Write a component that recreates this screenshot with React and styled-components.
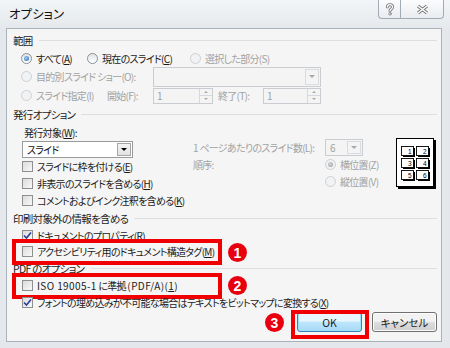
import React from 'react';
import styled, { createGlobalStyle, css } from 'styled-components';

const GlobalStyle = createGlobalStyle`
  html, body { margin: 0; padding: 0; }
  body {
    width: 450px;
    height: 348px;
    overflow: hidden;
    background: #e6e9ed;
    font-family: "Noto Sans CJK JP", "Liberation Sans", sans-serif;
    font-size: 10px;
    letter-spacing: -0.7px;
    font-feature-settings: "palt";
    color: #1b1b1b;
  }
  * { box-sizing: border-box; }
`;

const Window = styled.div`
  width: 450px;
  height: 348px;
  display: flex;
  flex-direction: column;
  background: linear-gradient(#f3f5f7, #e4e8ec 30px);
`;

const TitleBar = styled.div`
  height: 28px;
  display: flex;
  align-items: flex-start;
  justify-content: space-between;
`;

const Title = styled.div`
  padding: 5px 0 0 9px;
  font-size: 12.5px;
  letter-spacing: 0;
  line-height: 18px;
  color: #111;
`;

const Controls = styled.div`
  display: flex;
  margin-right: 6px;
`;

const CtrlButton = styled.div`
  width: ${(p) => p.w}px;
  height: 19px;
  display: flex;
  align-items: center;
  justify-content: center;
  border: 1px solid #a3acb6;
  border-top: none;
  background: linear-gradient(#fbfcfd, #e9ecf0);
  ${(p) => p.first && css`border-radius: 0 0 0 4px; border-right: none;`}
  ${(p) => p.last && css`border-radius: 0 0 4px 0;`}
`;

const Panel = styled.div`
  flex: 1;
  margin: 0 8px 6px 6px;
  border: 1px solid #a9b1b9;
  background: #f5f5f5;
  padding: 2px 4px 0 0;
  display: flex;
  flex-direction: column;
`;

const GroupHeader = styled.div`
  height: ${(p) => p.h || 18}px;
  display: flex;
  align-items: center;
  padding-left: 6px;
  font-size: 10.5px;
  &::after {
    content: '';
    flex: 1;
    height: 1px;
    margin-left: 6px;
    background: #dcdfe2;
  }
`;

const Row = styled.div`
  position: relative;
  height: ${(p) => p.h || 17}px;
  display: flex;
  align-items: center;
  padding-left: ${(p) => p.indent ?? 14}px;
`;

const Label = styled.span`
  color: ${(p) => (p.disabled ? '#a2a2a2' : '#1b1b1b')};
  white-space: nowrap;
  ${(p) => p.w && css`width: ${p.w}px; flex-shrink: 0;`}
`;

const Latin = styled.span`
  letter-spacing: 0.4px;
`;

const Item = styled.div`
  display: flex;
  align-items: center;
  width: ${(p) => p.w}px;
  flex-shrink: 0;
`;

const RadioCircle = styled.span`
  width: 11px;
  height: 11px;
  border-radius: 50%;
  flex-shrink: 0;
  margin-right: 4px;
  display: flex;
  align-items: center;
  justify-content: center;
  border: 1px solid ${(p) => (p.disabled ? '#cdd1d5' : '#8b9197')};
  background: ${(p) => (p.disabled ? '#f1f2f3' : 'linear-gradient(#e0e3e6, #ffffff)')};
  &::after {
    content: '';
    display: ${(p) => (p.checked ? 'block' : 'none')};
    width: 5px;
    height: 5px;
    border-radius: 50%;
    background: ${(p) =>
      p.disabled
        ? 'radial-gradient(circle at 40% 40%, #d8d8d8, #9a9a9a)'
        : 'radial-gradient(circle at 40% 40%, #9fd3ff, #1d5ea8)'};
  }
`;

const Box = styled.span`
  width: 11px;
  height: 11px;
  flex-shrink: 0;
  margin-right: 4px;
  border: 1px solid #8e8f8f;
  background: linear-gradient(135deg, #dcdcdc, #f8f8f8);
  display: flex;
  align-items: center;
  justify-content: center;
`;

const Radio = ({ checked, disabled, children, w }) => (
  <Item w={w}>
    <RadioCircle checked={checked} disabled={disabled} />
    <Label disabled={disabled}>{children}</Label>
  </Item>
);

const Check = ({ checked, children }) => (
  <>
    <Box>
      {checked && (
        <svg width="9" height="9" viewBox="0 0 9 9">
          <path d="M1 4.5 L3.5 7 L8 1.5" stroke="#2a3f9a" strokeWidth="1.6" fill="none" />
        </svg>
      )}
    </Box>
    <Label>{children}</Label>
  </>
);

const Combo = styled.div`
  width: ${(p) => p.w}px;
  height: ${(p) => p.h || 17}px;
  flex-shrink: 0;
  display: flex;
  align-items: stretch;
  border: 1px solid ${(p) => (p.disabled ? '#c9cdd1' : '#9a9a9a')};
  background: ${(p) => (p.disabled ? '#f4f4f4' : '#fff')};
  padding: 1px;
`;

const ComboText = styled.span`
  flex: 1;
  padding-left: 3px;
  line-height: 13px;
  color: ${(p) => (p.disabled ? '#a2a2a2' : '#111')};
`;

const DropBtn = styled.span`
  width: 14px;
  display: flex;
  align-items: center;
  justify-content: center;
  border: 1px solid ${(p) => (p.disabled ? '#d9dcdf' : '#a6a6a6')};
  background: ${(p) => (p.disabled ? '#f4f4f4' : 'linear-gradient(#f4f4f4, #e2e2e2)')};
  &::after {
    content: '';
    border-left: 3px solid transparent;
    border-right: 3px solid transparent;
    border-top: 3px solid ${(p) => (p.disabled ? '#a8a8a8' : '#000')};
  }
`;

const Spin = styled.div`
  width: ${(p) => p.w}px;
  height: 16px;
  flex-shrink: 0;
  display: flex;
  border: 1px solid #c9cdd1;
  background: #f4f4f4;
`;

const SpinBtns = styled.span`
  width: 13px;
  display: flex;
  flex-direction: column;
  border-left: 1px solid #d6d9dc;
  span {
    flex: 1;
    display: flex;
    align-items: center;
    justify-content: center;
  }
  span:first-child { border-bottom: 1px solid #d6d9dc; }
  span:first-child::after {
    content: '';
    border-left: 2px solid transparent;
    border-right: 2px solid transparent;
    border-bottom: 2px solid #a8a8a8;
  }
  span:last-child::after {
    content: '';
    border-left: 2px solid transparent;
    border-right: 2px solid transparent;
    border-top: 2px solid #a8a8a8;
  }
`;

const Columns = styled.div`
  display: flex;
`;

const LeftCol = styled.div`
  width: 188px;
  display: flex;
  flex-direction: column;
`;

const RightCol = styled.div`
  flex: 1;
  display: flex;
  padding-top: 16px;
`;

const OrderGrid = styled.div`
  display: grid;
  grid-template-columns: 132px 70px;
  grid-auto-rows: 17px;
  align-items: center;
  align-content: start;
`;

const Cell = styled.div`
  display: flex;
  align-items: center;
`;

const LayoutIcon = styled.svg`
  margin-left: 1px;
  margin-top: -1px;
`;

const Footer = styled.div`
  display: flex;
  justify-content: flex-end;
  align-items: center;
  gap: 10px;
  margin-top: 1px;
`;

const Button = styled.div`
  position: relative;
  width: 65px;
  height: 20px;
  display: flex;
  align-items: center;
  justify-content: center;
  border-radius: 3px;
  font-size: 10.5px;
  letter-spacing: 0;
  border: 1px solid ${(p) => (p.primary ? '#3c7fb1' : '#707070')};
  background: ${(p) =>
    p.primary
      ? 'linear-gradient(#eaf6fd 45%, #bee6fd 50%, #a7d9f5)'
      : 'linear-gradient(#f2f2f2 45%, #ebebeb 50%, #dddddd 51%, #cfcfcf)'};
  box-shadow: inset 0 0 0 1px ${(p) => (p.primary ? '#9ae4f8' : '#fcfcfc')};
`;

const Highlight = styled.span`
  position: absolute;
  border: 4px solid #f00000;
  pointer-events: none;
  ${(p) => css`
    left: ${p.l}px;
    top: ${p.t}px;
    width: ${p.w}px;
    height: ${p.h}px;
  `}
`;

const Marker = styled.span`
  position: absolute;
  width: 19px;
  height: 19px;
  border-radius: 50%;
  background: #e8000e;
  color: #fff;
  font-family: "Liberation Sans", "DejaVu Sans", sans-serif;
  font-weight: 700;
  font-size: 14px;
  letter-spacing: 0;
  display: flex;
  align-items: center;
  justify-content: center;
  left: ${(p) => p.l}px;
  top: ${(p) => p.t}px;
`;

const HelpGlyph = () => (
  <svg width="10" height="13" viewBox="-5 -7 10 14">
    <g fill="none" strokeLinecap="round">
      <path d="M-2.8 -2.6 C-2.8 -6 2.8 -6 2.8 -2.6 C2.8 -0.4 0 -0.6 0 1.6" stroke="#777" strokeWidth="3.2" />
      <path d="M-2.8 -2.6 C-2.8 -6 2.8 -6 2.8 -2.6 C2.8 -0.4 0 -0.6 0 1.6" stroke="#fff" strokeWidth="1.4" />
      <circle cx="0" cy="4.6" r="1.4" fill="#fff" stroke="#777" strokeWidth="0.9" />
    </g>
  </svg>
);

const CloseGlyph = () => (
  <svg width="13" height="11" viewBox="-6.5 -5.5 13 11">
    <g fill="none">
      <path d="M-4.5 -3.5 L4.5 3.5 M4.5 -3.5 L-4.5 3.5" stroke="#777" strokeWidth="3.4" />
      <path d="M-4.5 -3.5 L4.5 3.5 M4.5 -3.5 L-4.5 3.5" stroke="#fff" strokeWidth="1.5" />
    </g>
  </svg>
);

const slots = [
  [5, 8, '1'], [20, 8, '2'],
  [5, 20, '3'], [20, 20, '4'],
  [5, 32, '5'], [20, 32, '6'],
];

const PageLayout = () => (
  <LayoutIcon width="41" height="52" viewBox="0 0 41 52">
    <rect x="2" y="2" width="38" height="49" fill="#000" />
    <rect x="0.5" y="0.5" width="37" height="48" fill="#fff" stroke="#000" />
    {slots.map(([x, y, n]) => (
      <g key={n}>
        <rect x={x + 2} y={y + 2} width="12" height="9" fill="#000" />
        <rect x={x + 0.5} y={y + 0.5} width="12" height="9" fill="#fff" stroke="#000" strokeWidth="0.9" />
        <text x={x + 10.5} y={y + 7.8} fontSize="6.5" textAnchor="end"
          fontFamily="Liberation Sans, sans-serif" letterSpacing="0" fill="#000">{n}</text>
      </g>
    ))}
  </LayoutIcon>
);

export default function App() {
  return (
    <>
      <GlobalStyle />
      <Window>
        <TitleBar>
          <Title>オプション</Title>
          <Controls>
            <CtrlButton w={22} first><HelpGlyph /></CtrlButton>
            <CtrlButton w={44} last><CloseGlyph /></CtrlButton>
          </Controls>
        </TitleBar>
        <Panel>
          <GroupHeader>範囲</GroupHeader>
          <Row h={18}>
            <Radio w={66} checked>すべて(<u>A</u>)</Radio>
            <Radio w={103}>現在のスライド(<u>C</u>)</Radio>
            <Radio disabled>選択した部分(S)</Radio>
          </Row>
          <Row h={19}>
            <Radio w={132} disabled>目的別スライド ショー(O):</Radio>
            <Combo w={168} h={20} disabled>
              <ComboText />
              <DropBtn disabled />
            </Combo>
          </Row>
          <Row h={19}>
            <Radio w={86} disabled>スライド指定(I)</Radio>
            <Label w={46} disabled>開始(F):</Label>
            <Spin w={60}>
              <ComboText disabled>1</ComboText>
              <SpinBtns><span /><span /></SpinBtns>
            </Spin>
            <Label w={50} disabled style={{ paddingLeft: 5 }}>終了(T):</Label>
            <Spin w={58}>
              <ComboText disabled>1</ComboText>
              <SpinBtns><span /><span /></SpinBtns>
            </Spin>
          </Row>

          <GroupHeader>発行オプション</GroupHeader>
          <Columns>
            <LeftCol>
              <Row h={18} indent={17}>
                <Label>発行対象(<u>W</u>):</Label>
              </Row>
              <Row h={17} indent={15}>
                <Combo w={111}>
                  <ComboText>スライド</ComboText>
                  <DropBtn />
                </Combo>
              </Row>
              <Row indent={15}><Check>スライドに枠を付ける(<u>E</u>)</Check></Row>
              <Row indent={15}><Check>非表示のスライドを含める(<u>H</u>)</Check></Row>
              <Row indent={15}><Check>コメントおよびインク注釈を含める(<u>K</u>)</Check></Row>
            </LeftCol>
            <RightCol>
              <OrderGrid>
                <Cell><Label disabled>1 ページあたりのスライド数(L):</Label></Cell>
                <Cell>
                  <Combo w={38} disabled>
                    <ComboText disabled>6</ComboText>
                    <DropBtn disabled />
                  </Combo>
                </Cell>
                <Cell><Label disabled>順序:</Label></Cell>
                <Cell><Radio disabled checked>横位置(Z)</Radio></Cell>
                <Cell />
                <Cell><Radio disabled>縦位置(V)</Radio></Cell>
              </OrderGrid>
              <PageLayout />
            </RightCol>
          </Columns>

          <GroupHeader>印刷対象外の情報を含める</GroupHeader>
          <Row indent={15} h={16}><Check checked>ドキュメントのプロパティ(<u>R</u>)</Check></Row>
          <Row indent={15} h={17}>
            <Check>アクセシビリティ用のドキュメント構造タグ(<u>M</u>)</Check>
            <Highlight l={5} t={-4} w={210} h={26} />
            <Marker l={221} t={0}>1</Marker>
          </Row>
          <GroupHeader h={17}>PDF のオプション</GroupHeader>
          <Row indent={15}>
            <Check><Latin>ISO 19005-1</Latin> に準拠 <Latin>(PDF/A)(<u>1</u>)</Latin></Check>
            <Highlight l={5} t={-4} w={210} h={26} />
            <Marker l={221} t={-1}>2</Marker>
          </Row>
          <Row indent={15}><Check checked>フォントの埋め込みが不可能な場合はテキストをビットマップに変換する(<u>X</u>)</Check></Row>
          <Footer>
            <Button primary>
              OK
              <Highlight l={-7} t={-3} w={78} h={29} />
              <Marker l={-33} t={0}>3</Marker>
            </Button>
            <Button>キャンセル</Button>
          </Footer>
        </Panel>
      </Window>
    </>
  );
}
